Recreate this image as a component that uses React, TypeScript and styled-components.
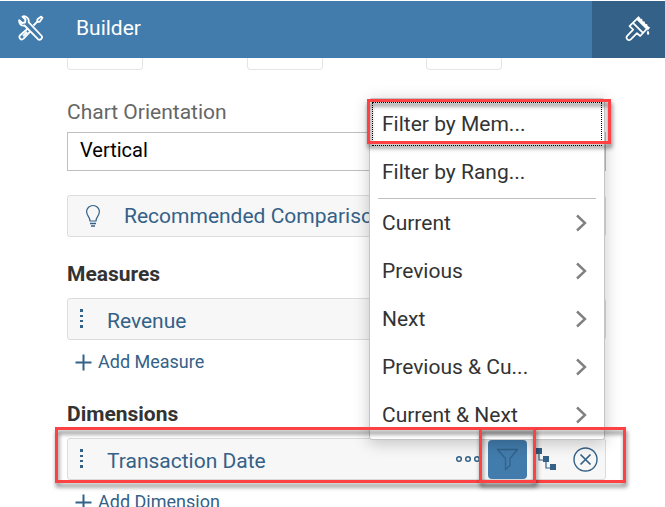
import React from "react";
import styled, { createGlobalStyle, css } from "styled-components";

const GlobalStyle = createGlobalStyle`
  * { box-sizing: border-box; }
  body {
    margin: 0;
    background: #fff;
    font-family: Roboto, "Liberation Sans", sans-serif;
    font-size: 21px;
    line-height: 24px;
    color: #333;
  }
  button, select { font: inherit; }
`;

const Page = styled.div`
  height: 100vh;
  overflow: hidden;
  padding-top: 1px;
`;

const Header = styled.header`
  display: flex;
  align-items: stretch;
  height: 57px;
  background: #427cac;
  color: #fff;
`;

const Title = styled.h1`
  display: flex;
  flex: 1;
  align-items: center;
  gap: 32px;
  margin: 0;
  padding: 0 18px 3px;
  font-size: 21px;
  font-weight: 400;
`;

const StyleTab = styled.button`
  display: flex;
  align-items: center;
  width: 73px;
  padding: 0 0 2px 31px;
  border: 0;
  background: #346187;
  color: #fff;
`;

const Panel = styled.main`
  padding: 0 59px 0 67px;
`;

const Tiles = styled.div`
  display: grid;
  grid-template-columns: repeat(3, 1fr);
  margin-bottom: 30px;
`;

const Tile = styled.div`
  width: 76px;
  height: 12px;
  border: 1px solid #e5e5e5;
  border-top: 0;
  border-radius: 0 0 4px 4px;
`;

const Label = styled.label`
  display: block;
  margin-bottom: 8px;
  color: #666;
`;

const Select = styled.select`
  display: block;
  width: 100%;
  height: 39px;
  padding: 0 12px 4px;
  border: 1px solid #bfbfbf;
  border-radius: 0;
  background: #fff;
  color: #000;
  font-size: 20px;
  appearance: none;
`;

const box = css`
  display: flex;
  align-items: center;
  width: 100%;
  height: 42px;
  border: 1px solid #dcdcdc;
  border-radius: 3px;
  background: #f7f7f7;
  color: #346187;
`;

const Recommended = styled.button`
  ${box}
  gap: 22px;
  margin: 24px 0;
  padding: 0 16px;
  text-align: left;
  white-space: nowrap;
`;

const Section = styled.section`
  height: 140px;
`;

const Heading = styled.h2`
  margin: 0;
  padding: 1px 0 12px;
  font-size: 21px;
  line-height: 24px;
  font-weight: 700;
`;

const Field = styled.div`
  ${box}
  position: relative;
  padding: 0 7px 0 10px;
`;

const FieldName = styled.span`
  flex: 1;
  padding: 3px 0 0 22px;
`;

const IconButton = styled.button<{ $active?: boolean }>`
  display: flex;
  align-items: center;
  justify-content: center;
  height: 39px;
  padding: 0;
  border: 0;
  border-radius: 4px;
  color: #346187;
  background: ${(p) => (p.$active ? "#427cac" : "transparent")};
  width: ${(p) => (p.$active ? "39px" : "auto")};
`;

const Actions = styled.div`
  display: flex;
  align-items: center;
`;

const MoreButton = styled(IconButton)`
  margin-right: 7px;
`;

const LevelsButton = styled(IconButton)`
  margin: 0 16px 0 9px;
`;

const AddButton = styled.button`
  display: flex;
  align-items: center;
  gap: 6px;
  margin-top: 10px;
  padding: 0 8px;
  border: 0;
  background: none;
  color: #346187;
  font-size: 18px;
  line-height: 24px;
`;

const Menu = styled.div`
  position: absolute;
  right: 0;
  bottom: 39px;
  width: 236px;
  padding: 1px 0 0;
  border: 1px solid #c4c4c4;
  border-radius: 3px;
  background: #fff;
  box-shadow: 0 3px 16px rgba(0, 0, 0, 0.22);
`;

const MenuItem = styled.button<{ $focused?: boolean }>`
  position: relative;
  display: flex;
  align-items: center;
  justify-content: space-between;
  width: 100%;
  height: 48px;
  padding: 0 17px 0 12px;
  border: 0;
  background: none;
  color: #333;
  text-align: left;
  outline: ${(p) => (p.$focused ? "1px dotted #000" : "none")};
  outline-offset: -3px;
`;

const Divider = styled.hr`
  height: 1px;
  margin: 2px 8px 0;
  border: 0;
  background: #bfbfbf;
`;

const Highlight = styled.span<{ $area: "item" | "row" | "button" }>`
  position: absolute;
  z-index: 2;
  border: 3px solid #fe4142;
  filter: drop-shadow(1px 4px 2px rgba(0, 0, 0, 0.5));
  pointer-events: none;
  ${(p) => p.$area === "item" && "inset: -1px -7px 4px -3px;"}
  ${(p) => p.$area === "row" && "inset: -12px -21px -4px -13px;"}
  ${(p) => p.$area === "button" && "top: -12px; bottom: -4px; right: 69px; width: 57px;"}
`;

const ToolsIcon = () => (
  <svg width="26" height="26" viewBox="0 0 26 26" fill="none" stroke="currentColor" strokeWidth="1.8" strokeLinejoin="round" aria-hidden="true">
    <path d="M4.500 1.500 7.500 4.500 7 7.500 4 8 1.200 5.200C.8 8.500 3 11 6.500 10.500L20 24.200c2 1.600 5-.9 3.700-3.200L10.600 7.200C11.500 3.500 8 .5 4.500 1.500Z" />
    <path d="m15.500 10.500 3.500-3.600.5-2.600L23.200 1.600l1.300 1.200-2.600 3.800-2.700.6" />
    <path d="m9.600 13.700-7.500 6.600c-2 2.200.9 5.300 3.200 3.600l7-7.500M5 21l4-4" />
  </svg>
);

const BrushIcon = () => (
  <svg width="28" height="28" viewBox="0 0 28 28" fill="none" stroke="currentColor" strokeWidth="1.700" strokeLinejoin="round" aria-hidden="true">
    <path d="M6.500 11.200 15 2.800l10 9.800-7.800 8.400-3.200-2.800-6.200 6.200c-2.400 2-5.700-1-3.600-3.600l6-6.200Z" />
    <path d="m10 7.800 10 10" />
    <path d="M13.400 4.200 15.600 1l2 2.800 1.600.2.400 2.400 2 .2.400 2.200 2.200.4.400 2 2.600 1.200-2 2.600-2.600-1.200-8-8Z" fill="currentColor" stroke="none" />
    <path d="M24.800 15.200c1.700 2 2 4.400.4 4.600-1.700-.1-1.700-2.400-.4-4.600Z" fill="currentColor" stroke="none" />
  </svg>
);

const BulbIcon = () => (
  <svg width="18" height="24" viewBox="0 0 18 24" fill="none" stroke="currentColor" strokeWidth="1.200" aria-hidden="true">
    <path d="M6 17c0-4-3.400-5.200-3.400-9.400A6.300 6.300 0 0 1 9 1.500a6.300 6.300 0 0 1 6.400 6.100C15.400 11.800 12 13 12 17Z" />
    <path d="M6 19.500h6M7 22h4" strokeWidth="1.600" />
  </svg>
);

const HandleIcon = () => (
  <svg width="7" height="20" viewBox="0 0 7 20" fill="currentColor" aria-hidden="true">
    <path d="M2 0h3v3H2zM2 6h3v2H2zM2 11h3v2H2zM2 16h3v3H2z" />
  </svg>
);

const PlusIcon = () => (
  <svg width="17" height="17" viewBox="0 0 17 17" stroke="currentColor" strokeWidth="2" aria-hidden="true">
    <path d="M8.500 .5v16M.5 8.500h16" />
  </svg>
);

const ChevronIcon = () => (
  <svg width="12" height="18" viewBox="0 0 12 18" fill="none" stroke="#808080" strokeWidth="2.400" aria-hidden="true">
    <path d="m2 1.500 8 7.500-8 7.500" />
  </svg>
);

const MoreIcon = () => (
  <svg width="26" height="8" viewBox="0 0 26 8" fill="none" stroke="currentColor" strokeWidth="1.500" aria-hidden="true">
    <circle cx="4" cy="4" r="2.300" />
    <circle cx="13" cy="4" r="2.300" />
    <circle cx="22" cy="4" r="2.300" />
  </svg>
);

const FilterIcon = () => (
  <svg width="23" height="23" viewBox="0 0 23 23" fill="none" stroke="currentColor" strokeWidth="1.300" strokeLinejoin="round" aria-hidden="true">
    <path d="M1.500 1.500h20l-7.500 9v7l-4.500 4v-11Z" />
  </svg>
);

const LevelsIcon = () => (
  <svg width="21" height="24" viewBox="0 0 21 24" fill="none" aria-hidden="true">
    <path d="M3 6v7h6M10 14v7h6" stroke="currentColor" strokeWidth="1.200" />
    <path d="M0 1h6v6H0zM7 9h6v6H7zM14 17h6v6h-6z" fill="currentColor" />
  </svg>
);

const CloseIcon = () => (
  <svg width="25" height="25" viewBox="0 0 25 25" fill="none" stroke="currentColor" strokeWidth="1.400" aria-hidden="true">
    <circle cx="12.500" cy="12.500" r="11.500" />
    <path d="m7.500 7.500 10 10M17.500 7.500l-10 10" strokeWidth="1.700" />
  </svg>
);

const periods = ["Current", "Previous", "Next", "Previous & Cu...", "Current & Next"];

export default function App() {
  return (
    <Page>
      <GlobalStyle />
      <Header>
        <Title>
          <ToolsIcon />
          Builder
        </Title>
        <StyleTab aria-label="Styling">
          <BrushIcon />
        </StyleTab>
      </Header>
      <Panel>
        <Tiles>
          <Tile />
          <Tile />
          <Tile />
        </Tiles>
        <Label htmlFor="orientation">Chart Orientation</Label>
        <Select id="orientation" defaultValue="Vertical">
          <option>Vertical</option>
        </Select>
        <Recommended>
          <BulbIcon />
          Recommended Compariso
        </Recommended>
        <Section>
          <Heading>Measures</Heading>
          <Field>
            <HandleIcon />
            <FieldName>Revenue</FieldName>
          </Field>
          <AddButton>
            <PlusIcon />
            Add Measure
          </AddButton>
        </Section>
        <Section>
          <Heading>Dimensions</Heading>
          <Field>
            <HandleIcon />
            <FieldName>Transaction Date</FieldName>
            <Actions>
              <MoreButton aria-label="More">
                <MoreIcon />
              </MoreButton>
              <IconButton $active aria-label="Filter">
                <FilterIcon />
              </IconButton>
              <LevelsButton aria-label="Hierarchy">
                <LevelsIcon />
              </LevelsButton>
              <IconButton aria-label="Remove">
                <CloseIcon />
              </IconButton>
            </Actions>
            <Menu role="menu">
              <MenuItem role="menuitem" $focused>
                Filter by Mem...
                <Highlight $area="item" />
              </MenuItem>
              <MenuItem role="menuitem">Filter by Rang...</MenuItem>
              <Divider />
              {periods.map((period) => (
                <MenuItem role="menuitem" key={period}>
                  {period}
                  <ChevronIcon />
                </MenuItem>
              ))}
            </Menu>
            <Highlight $area="row" />
            <Highlight $area="button" />
          </Field>
          <AddButton>
            <PlusIcon />
            Add Dimension
          </AddButton>
        </Section>
      </Panel>
    </Page>
  );
}
